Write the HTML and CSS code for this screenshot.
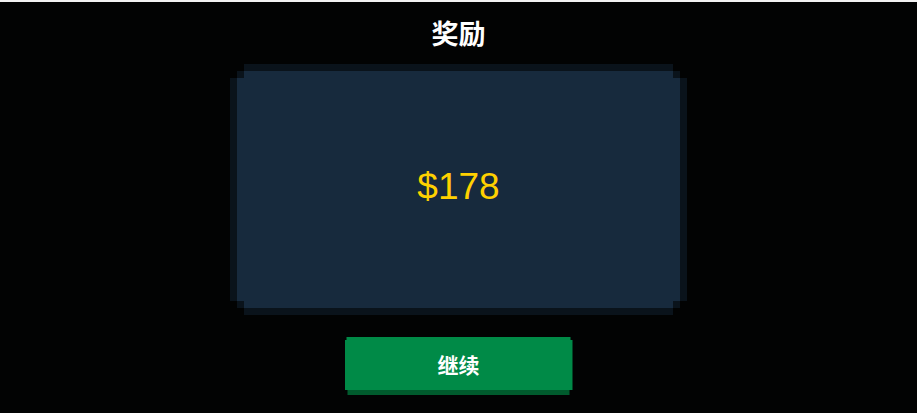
FILE: index.html
```html
<!DOCTYPE html>
<html lang="zh-CN">
<head>
  <meta charset="UTF-8" />
  <meta name="viewport" content="width=device-width, initial-scale=1.0"/>
  <title>奖励</title>
  <link rel="stylesheet" href="styles.css">
</head>
<body>
  <div class="screen">
    <h2 class="title">奖励</h2>

    <div class="card">
      <div class="card-body">
        <div class="amount">$178</div>
      </div>
    </div>

    <button class="continue">继续</button>
  </div>
</body>
</html>
```

FILE: styles.css
```css
body {
  margin: 0;
  background: #020303;
  border-top: 2px solid #f2f2f2;
  font-family: "Noto Sans CJK SC", "Noto Sans", sans-serif;
}
.screen {
  display: flex;
  flex-direction: column;
  align-items: center;
  height: 411px;
}
.title {
  margin: 12px 0 12px;
  line-height: 38px;
  font-size: 27px;
  font-weight: 700;
  color: #fff;
}
/* pixel-style frame: outer dark rim with two-step corners */
.card {
  width: 457px;
  height: 251px;
  box-sizing: border-box;
  padding: 7px;
  background: #0a131b;
  clip-path: polygon(
    14px 0, calc(100% - 14px) 0, calc(100% - 14px) 7px, calc(100% - 7px) 7px,
    calc(100% - 7px) 14px, 100% 14px, 100% calc(100% - 14px), calc(100% - 7px) calc(100% - 14px),
    calc(100% - 7px) calc(100% - 7px), calc(100% - 14px) calc(100% - 7px), calc(100% - 14px) 100%, 14px 100%,
    14px calc(100% - 7px), 7px calc(100% - 7px), 7px calc(100% - 14px), 0 calc(100% - 14px),
    0 14px, 7px 14px, 7px 7px, 14px 7px
  );
}
.card-body {
  height: 100%;
  display: flex;
  align-items: center;
  justify-content: center;
  background: #172a3d;
  clip-path: polygon(
    7px 0, calc(100% - 7px) 0, calc(100% - 7px) 7px, 100% 7px,
    100% calc(100% - 7px), calc(100% - 7px) calc(100% - 7px), calc(100% - 7px) 100%, 7px 100%,
    7px calc(100% - 7px), 0 calc(100% - 7px), 0 7px, 7px 7px
  );
}
.amount {
  margin-bottom: 6px;
  font-family: "Liberation Sans", Arial, sans-serif;
  font-size: 37px;
  color: #ffd100;
}
/* green button with a darker ledge along the bottom */
.continue {
  margin-top: 22px;
  width: 228px;
  height: 58px;
  padding: 0 0 5px;
  border: none;
  background: linear-gradient(to bottom, #008a47 53px, #005b2d 53px);
  color: #fff;
  font-family: "Noto Sans CJK SC", "Noto Sans", sans-serif;
  font-size: 21px;
  font-weight: 700;
  cursor: pointer;
  clip-path: polygon(
    2px 0, calc(100% - 2px) 0, calc(100% - 2px) 3px, 100% 3px,
    100% 53px, calc(100% - 3px) 53px, calc(100% - 3px) 100%, 3px 100%,
    3px 53px, 0 53px, 0 3px, 2px 3px
  );
}
.continue:hover {
  background: linear-gradient(to bottom, #009a50 53px, #005b2d 53px);
}
```
